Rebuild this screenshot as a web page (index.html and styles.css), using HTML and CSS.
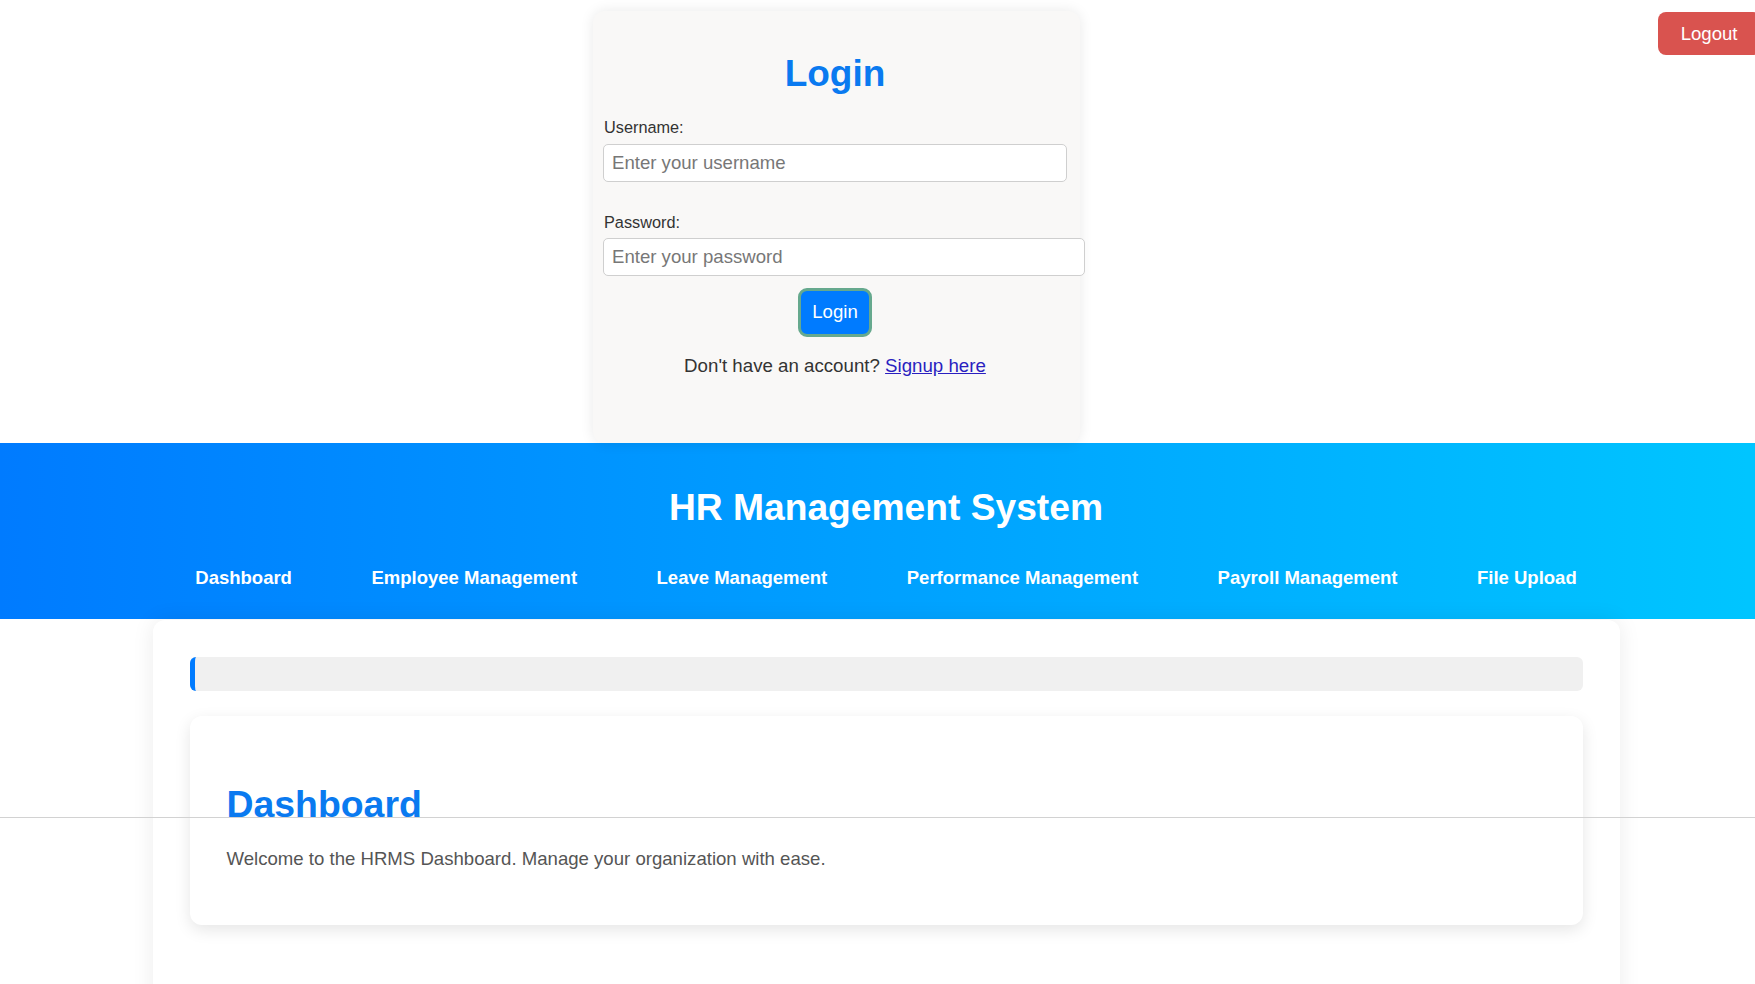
FILE: index.html
```html
<!DOCTYPE html>
<html lang="en">
<head>
<meta charset="utf-8">
<title>HR Management System</title>
<link rel="stylesheet" href="styles.css">
</head>
<body>
<div class="page">
  <button class="logout" type="button">Logout</button>

  <section class="auth">
    <div class="login-card">
      <h2 class="login-title">Login</h2>
      <form class="login-form">
        <label class="field-label field-label-first" for="username">Username:</label>
        <input class="field-input field-user" id="username" type="text" placeholder="Enter your username">
        <label class="field-label field-label-second" for="password">Password:</label>
        <input class="field-input field-pass" id="password" type="password" placeholder="Enter your password">
        <button class="login-btn" type="button">Login</button>
      </form>
      <p class="signup">Don't have an account? <a href="#">Signup here</a></p>
    </div>
  </section>

  <header class="topbar">
    <h1 class="topbar-title">HR Management System</h1>
    <nav class="topnav">
      <a href="#">Dashboard</a>
      <a href="#">Employee Management</a>
      <a href="#">Leave Management</a>
      <a href="#">Performance Management</a>
      <a href="#">Payroll Management</a>
      <a href="#">File Upload</a>
    </nav>
  </header>

  <main class="content">
    <div class="content-card">
      <div class="notice-bar"></div>
      <section class="panel">
        <h2 class="panel-title">Dashboard</h2>
        <p class="panel-text">Welcome to the HRMS Dashboard. Manage your organization with ease.</p>
      </section>
    </div>
  </main>

  <div class="rule-line"></div>
</div>
</body>
</html>
```

FILE: styles.css
```css
html, body {
  margin: 0;
  padding: 0;
  overflow: hidden;
  background: #ffffff;
}

body {
  font-family: "Liberation Sans", Arial, sans-serif;
  color: #333;
}

.page {
  position: relative;
  width: 1772px;
  min-height: 1100px;
}

/* Logout */
.logout {
  position: absolute;
  top: 12px;
  right: 11.5px;
  height: 43px;
  padding: 0 23px;
  border: none;
  border-radius: 8px;
  background: #d9534f;
  color: #ffffff;
  font-family: "Liberation Sans", Arial, sans-serif;
  font-size: 18.6px;
  cursor: pointer;
  z-index: 3;
}

/* Login area */
.auth {
  height: 443px;
  display: flex;
  justify-content: flex-start;
  align-items: flex-start;
  padding-left: 593px;
  box-sizing: border-box;
}

.login-card {
  width: 487px;
  height: 432px;
  margin-top: 11px;
  padding: 0 13px 0 10px;
  box-sizing: border-box;
  background: #f9f8f7;
  border-radius: 12px;
  box-shadow: 0 0 14px rgba(0, 0, 0, 0.09);
}

.login-title {
  margin: 43px 0 0;
  font-size: 37px;
  line-height: 40px;
  font-weight: bold;
  text-align: center;
  color: #0a7af0;
}

.login-form {
  display: flex;
  flex-direction: column;
  align-items: flex-start;
}

.field-label {
  display: block;
  font-size: 16.3px;
  line-height: 18.5px;
  color: #333;
  padding-left: 1px;
}

.field-label-first {
  margin-top: 24.2px;
}

.field-label-second {
  margin-top: 31.2px;
}

.field-input {
  box-sizing: border-box;
  height: 38px;
  padding: 0 8px;
  border: 1.5px solid #cfcfcf;
  border-radius: 5px;
  background: #ffffff;
  font-family: "Liberation Sans", Arial, sans-serif;
  font-size: 18.6px;
  color: #333;
  outline: none;
}

.field-input::placeholder {
  color: #777;
}

.field-user {
  width: 464px;
  margin-top: 7.3px;
}

.field-pass {
  width: 482px;
  margin-top: 6.3px;
}

.login-btn {
  align-self: center;
  margin-top: 12px;
  width: 74px;
  height: 49px;
  padding: 0;
  box-sizing: border-box;
  border: 3px solid #66a98e;
  border-radius: 9px;
  background: #007bff;
  color: #ffffff;
  font-family: "Liberation Sans", Arial, sans-serif;
  font-size: 18.6px;
  cursor: pointer;
}

.signup {
  margin: 18px 0 0;
  font-size: 18.7px;
  line-height: 21px;
  text-align: center;
  color: #333;
}

.signup a {
  color: #2a1fc0;
  text-decoration: underline;
}

/* Header */
.topbar {
  height: 176px;
  box-sizing: border-box;
  padding-top: 43px;
  background: linear-gradient(90deg, #007bff 0%, #00c6ff 100%);
  color: #ffffff;
}

.topbar-title {
  margin: 0;
  font-size: 37.2px;
  line-height: 42px;
  font-weight: bold;
  text-align: center;
}

.topnav {
  margin-top: 39px;
  display: flex;
  justify-content: center;
  gap: 79.5px;
}

.topnav a {
  color: #ffffff;
  text-decoration: none;
  font-weight: bold;
  font-size: 18.5px;
  line-height: 21px;
}

/* Content */
.content {
  padding-top: 1px;
}

.content-card {
  width: 1467px;
  min-height: 420px;
  margin: 0 auto;
  padding: 37px;
  box-sizing: border-box;
  background: #ffffff;
  border-radius: 12px;
  box-shadow: 0 0 22px rgba(0, 0, 0, 0.08);
}

.notice-bar {
  height: 34px;
  border-left: 5px solid #007bff;
  border-radius: 6px;
  background: #f0f0f0;
}

.panel {
  margin-top: 25px;
  padding: 37px;
  background: #ffffff;
  border-radius: 12px;
  box-shadow: 0 5px 16px rgba(0, 0, 0, 0.1);
}

.panel-title {
  margin: 30.3px 0 0;
  font-size: 37.4px;
  line-height: 42px;
  font-weight: bold;
  color: #0a7af0;
}

.panel-text {
  margin: 22.7px 0 19px;
  font-size: 18.6px;
  line-height: 21px;
  color: #555;
}

.rule-line {
  position: absolute;
  top: 817px;
  left: 0;
  right: 0;
  height: 1px;
  background: #d2d2d2;
  z-index: 5;
}
```
